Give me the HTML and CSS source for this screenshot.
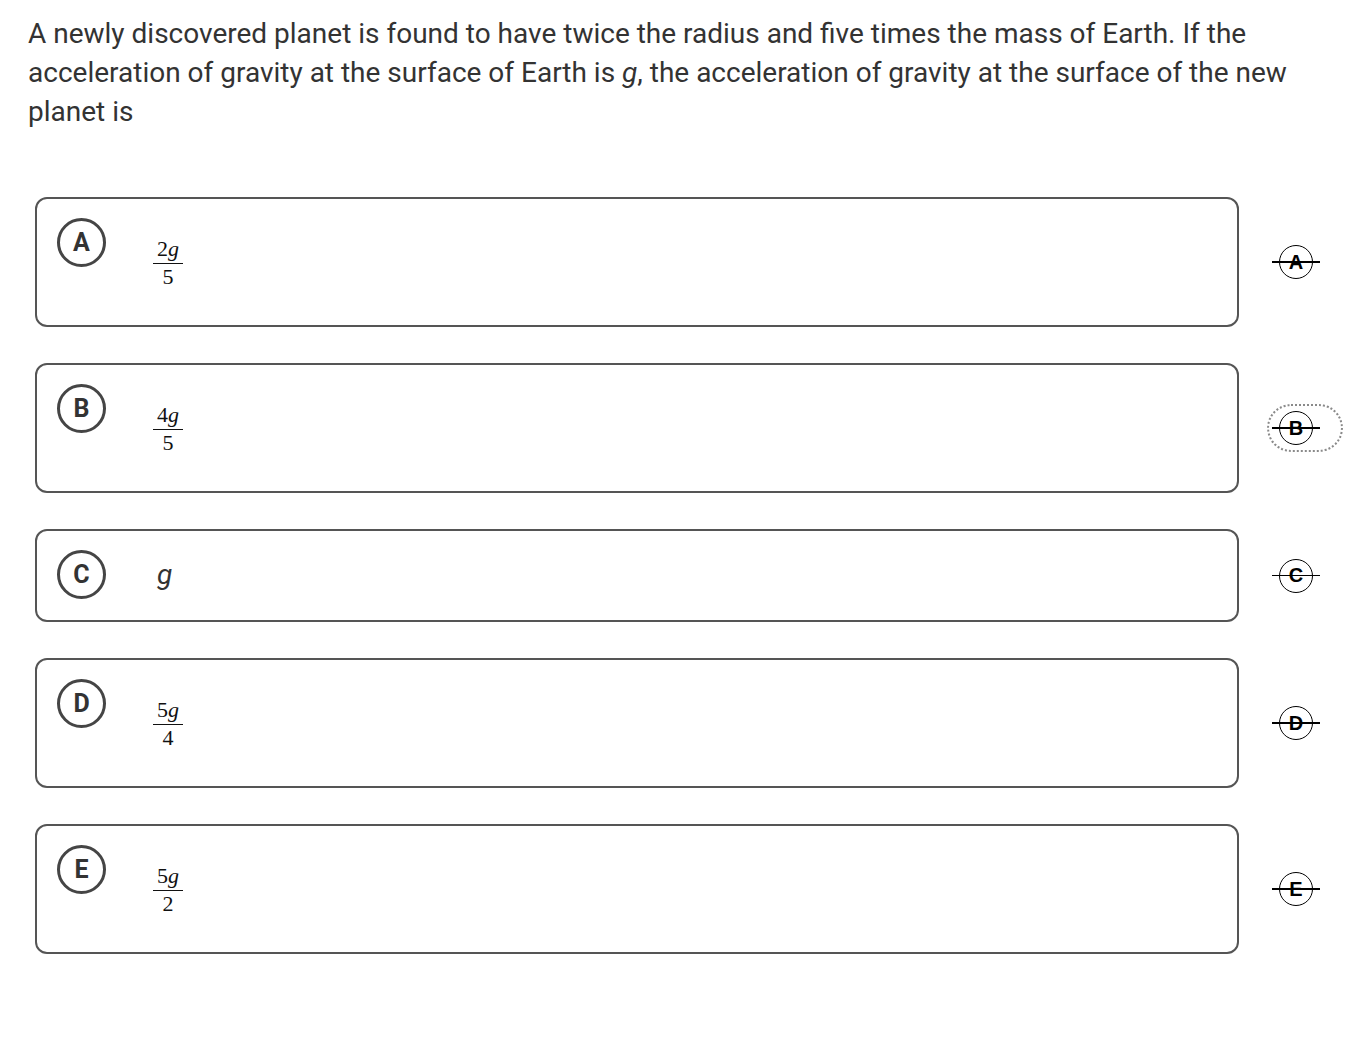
FILE: index.html
```html
<!DOCTYPE html>
<html lang="en">
<head>
<meta charset="utf-8">
<title>Question</title>
<link rel="stylesheet" href="styles.css">
</head>
<body>
<div class="page">
  <p class="question">A newly discovered planet is found to have twice the radius and five times the mass of Earth. If the acceleration of gravity at the surface of Earth is <i>g</i>, the acceleration of gravity at the surface of the new planet is</p>

  <div class="options">
    <div class="option">
      <div class="card">
        <span class="letter">A</span>
        <div class="math">
          <span class="frac"><span class="num">2<i>g</i></span><span class="den">5</span></span>
        </div>
      </div>
      <button class="strike"><span class="strike-circle">A</span></button>
    </div>

    <div class="option">
      <div class="card">
        <span class="letter">B</span>
        <div class="math">
          <span class="frac"><span class="num">4<i>g</i></span><span class="den">5</span></span>
        </div>
      </div>
      <button class="strike focused"><span class="strike-circle">B</span></button>
    </div>

    <div class="option">
      <div class="card">
        <span class="letter">C</span>
        <div class="plain"><i>g</i></div>
      </div>
      <button class="strike"><span class="strike-circle">C</span></button>
    </div>

    <div class="option">
      <div class="card">
        <span class="letter">D</span>
        <div class="math">
          <span class="frac"><span class="num">5<i>g</i></span><span class="den">4</span></span>
        </div>
      </div>
      <button class="strike"><span class="strike-circle">D</span></button>
    </div>

    <div class="option">
      <div class="card">
        <span class="letter">E</span>
        <div class="math">
          <span class="frac"><span class="num">5<i>g</i></span><span class="den">2</span></span>
        </div>
      </div>
      <button class="strike"><span class="strike-circle">E</span></button>
    </div>
  </div>
</div>
</body>
</html>
```

FILE: styles.css
```css
* { box-sizing: border-box; }

html, body {
  margin: 0;
  padding: 0;
  background: #ffffff;
}

.page {
  padding: 14px 28px 40px;
  font-family: Roboto, "Liberation Sans", Arial, sans-serif;
  color: #2f2f2f;
}

.question {
  margin: 0;
  font-size: 28px;
  line-height: 39px;
  color: #333333;
}

.options {
  margin-top: 66px;
  display: flex;
  flex-direction: column;
  gap: 36px;
}

.option {
  display: flex;
  align-items: center;
  margin-left: 7px;
}

.card {
  width: 1204px;
  flex: none;
  display: flex;
  align-items: flex-start;
  gap: 47px;
  border: 2px solid #555555;
  border-radius: 12px;
  padding: 19px 20px 21px;
  background: #fff;
}

.letter {
  flex: none;
  width: 49px;
  height: 49px;
  border: 3px solid #454545;
  border-radius: 50%;
  display: flex;
  align-items: center;
  justify-content: center;
  font-family: Roboto, "Liberation Sans", Arial, sans-serif;
  font-weight: 700;
  font-size: 25px;
  color: #333333;
}

.math {
  padding: 20px 0 16px;
}

.frac {
  display: inline-flex;
  flex-direction: column;
  align-items: stretch;
  font-family: "Liberation Serif", "Times New Roman", serif;
  font-size: 22px;
  color: #111;
  text-align: center;
}

.frac i {
  font-family: "Liberation Serif", "Times New Roman", serif;
  font-style: italic;
}

.num {
  line-height: 22px;
  padding: 0 4px 3px;
  border-bottom: 1px solid #111;
}

.den {
  line-height: 22px;
  padding-top: 2px;
}

.plain {
  font-size: 28px;
  line-height: 49px;
  color: #333333;
  padding-left: 4px;
}

.strike {
  margin-left: 32px;
  width: 68px;
  height: 40px;
  padding: 0;
  border: none;
  background: transparent;
  display: flex;
  align-items: center;
  justify-content: flex-start;
  border-radius: 22px;
  cursor: pointer;
}

.strike.focused {
  outline: 2px dotted #8a8a8a;
  outline-offset: 2px;
}

.strike-circle {
  position: relative;
  margin-left: 8px;
  width: 34px;
  height: 34px;
  border: 1.5px solid #000;
  border-radius: 50%;
  display: flex;
  align-items: center;
  justify-content: center;
  font-family: "Liberation Sans", Arial, sans-serif;
  font-weight: 700;
  font-size: 20px;
  color: #000;
}

.strike-circle::after {
  content: "";
  position: absolute;
  left: -8px;
  right: -8px;
  top: 50%;
  height: 1.5px;
  margin-top: -0.75px;
  background: #000;
}
```
